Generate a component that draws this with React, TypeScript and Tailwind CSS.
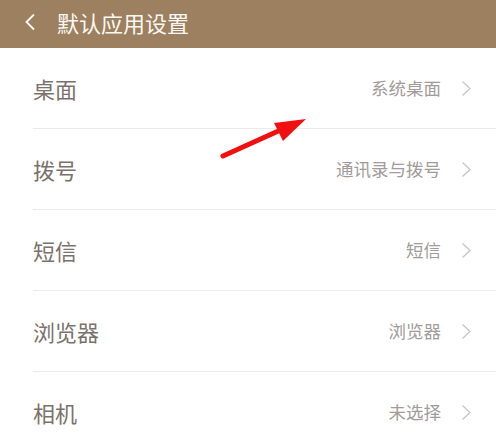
const rows = [
  { label: '桌面', value: '系统桌面' },
  { label: '拨号', value: '通讯录与拨号' },
  { label: '短信', value: '短信' },
  { label: '浏览器', value: '浏览器' },
  { label: '相机', value: '未选择' },
]

export default function App() {
  return (
    <div
      className="relative w-[496px] h-[434px] overflow-hidden bg-white"
      style={{ fontFamily: '"Noto Sans CJK SC", "Noto Sans", sans-serif' }}
    >
      {/* Header */}
      <div className="flex items-center h-12 pb-[4px] bg-[#9c8060] text-[#fbf8f4]">
        <svg className="ml-[24px] w-[12px] h-[18px]" viewBox="0 0 12 18" fill="none">
          <path d="M10 1.5 L2.5 9 L10 16.5" stroke="currentColor" strokeWidth="1.8" />
        </svg>
        <span className="ml-[21px] text-[22px] leading-none">默认应用设置</span>
      </div>

      {/* List */}
      <div>
        {rows.map((row) => (
          <div key={row.label} className="ml-[33px] h-[81px] flex items-center border-b border-[#ebebeb] pr-[24px]">
            <span className="flex-1 text-[22px] text-[#7b716b]">{row.label}</span>
            <span className="text-[17.5px] text-[#a19c99]">{row.value}</span>
            <svg className="ml-[20px] w-[11px] h-[17px]" viewBox="0 0 11 17" fill="none">
              <path d="M1.5 1.5 L9 8.5 L1.5 15.5" stroke="#c6c6c6" strokeWidth="1.3" />
            </svg>
          </div>
        ))}
      </div>

      {/* Red arrow annotation */}
      <svg className="absolute left-0 top-0 pointer-events-none" width="496" height="434" viewBox="0 0 496 434">
        <line x1="223" y1="156" x2="285" y2="128" stroke="#f01010" strokeWidth="5" strokeLinecap="round" />
        <polygon points="306,119 274,123 283,141" fill="#f01010" />
      </svg>
    </div>
  )
}
